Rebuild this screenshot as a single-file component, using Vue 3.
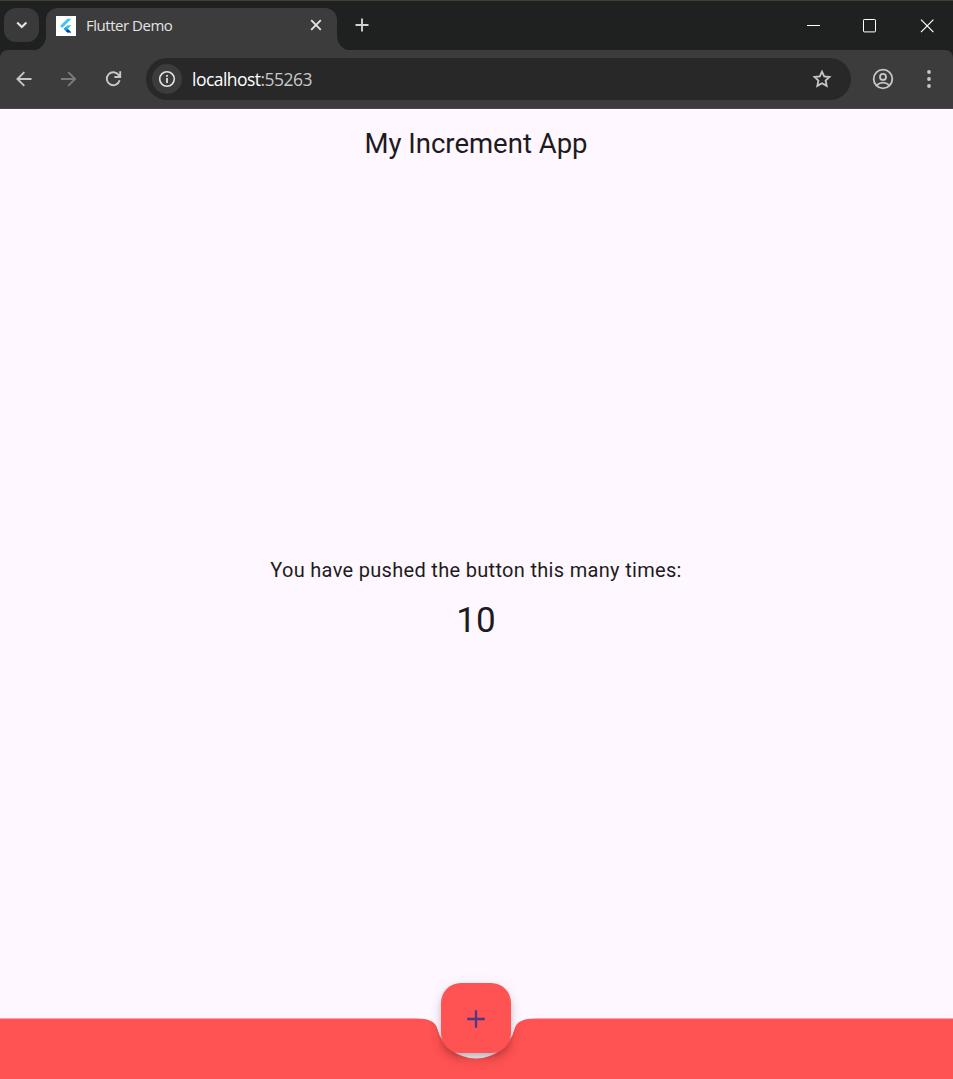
<script setup>
import { ref } from 'vue'

const count = ref(10)
</script>

<template>
  <div class="window">
    <header class="tabstrip">
      <button class="tab-search" aria-label="Search tabs">
        <svg width="35" height="34" viewBox="0 0 35 34"><path d="M13.2 14.6 17.8 19.1 22.4 14.6" fill="none" stroke="#e3e3e3" stroke-width="2.1" /></svg>
      </button>
      <div class="tab">
        <svg class="flare left" width="15" height="15" viewBox="0 0 15 15"><path d="M15 0V15H0A15 15 0 0 0 15 0Z" fill="#3c3c3c" /></svg>
        <svg class="favicon" width="20" height="20" viewBox="0 0 20 20">
          <path d="M0 0H20V20H0Z" fill="#fff" />
          <path d="M11.3 2.7H15.4L6.2 12 4.1 9.9Z" fill="#45c1f5" />
          <path d="M11.4 9.2H15.4L11.8 12.9 15.4 16.6H11.4L7.6 12.9Z" fill="#42bdf2" />
          <path d="M9.7 15 11.8 12.9 15.4 16.6H11.4Z" fill="#08418e" />
          <path d="M7.6 12.9 9.7 10.9 11.8 12.9 9.7 15Z" fill="#259fe5" />
        </svg>
        <span class="tab-title">Flutter Demo</span>
        <svg class="tab-close" width="12" height="12" viewBox="0 0 12 12"><path d="M1.2 1.2 10.8 10.8M10.8 1.2 1.2 10.8" stroke="#e3e3e3" stroke-width="1.9" /></svg>
        <svg class="flare right" width="15" height="15" viewBox="0 0 15 15"><path d="M0 0V15H15A15 15 0 0 1 0 0Z" fill="#3c3c3c" /></svg>
      </div>
      <svg class="new-tab" width="14" height="14" viewBox="0 0 14 14"><path d="M7 .5V13.5M.5 7H13.5" stroke="#d0d1d0" stroke-width="1.9" /></svg>
      <div class="controls">
        <svg width="14" height="14" viewBox="0 0 14 14"><path d="M1 6.5H14" stroke="#fff" /></svg>
        <svg width="14" height="14" viewBox="0 0 14 14"><rect x=".5" y=".5" width="12" height="12.4" rx=".7" fill="none" stroke="#fff" /></svg>
        <svg width="14" height="14" viewBox="0 0 14 14"><path d="M1 .7 13.4 13.1M13.4.7 1 13.1" stroke="#fff" stroke-width="1.2" /></svg>
      </div>
    </header>

    <nav class="toolbar">
      <svg class="nav-icon" width="20" height="20" viewBox="0 0 20 20"><path d="M17.5 10H3.5M10.3 3.1 3.4 10 10.3 16.9" fill="none" stroke="#c7c7c7" stroke-width="1.9" /></svg>
      <svg class="nav-icon" width="20" height="20" viewBox="0 0 20 20"><path d="M2 10H16M9.2 3.1 16.1 10 9.2 16.9" fill="none" stroke="#7b7b7b" stroke-width="1.9" /></svg>
      <svg class="nav-icon" width="20" height="20" viewBox="0 0 20 20"><path d="M15.6 11.3A6.5 6.5 0 1 1 14.7 6.1L16.1 7.7M16.2 2.3V8H10.4" fill="none" stroke="#c7c7c7" stroke-width="1.9" /></svg>
      <div class="address">
        <span class="site-info">
          <svg width="18" height="18" viewBox="0 0 18 18"><circle cx="9" cy="9" r="7.3" fill="none" stroke="#e3e3e3" stroke-width="1.6" /><path d="M9 8.1V13M9 5V6.8" stroke="#e3e3e3" stroke-width="1.8" /></svg>
        </span>
        <span class="url">localhost<span class="port">:55263</span></span>
        <svg class="star" width="20" height="20" viewBox="0 0 20 20"><path d="M10 2.6 12.2 7.4 17.5 8 13.6 11.6 14.7 16.9 10 14.2 5.3 16.9 6.4 11.6 2.5 8 7.8 7.4Z" fill="none" stroke="#c7c7c7" stroke-width="1.8" /></svg>
      </div>
      <svg class="profile" width="22" height="22" viewBox="0 0 22 22"><g fill="none" stroke="#c7c7c7" stroke-width="1.8"><circle cx="11" cy="11" r="9.3" /><circle cx="11" cy="8.9" r="3" /><path d="M4.6 17.3Q11 12 17.4 17.3" /></g></svg>
      <svg class="more" width="6" height="20" viewBox="0 0 6 20"><g fill="#c7c7c7"><circle cx="3" cy="3" r="1.9" /><circle cx="3" cy="10" r="1.9" /><circle cx="3" cy="17" r="1.9" /></g></svg>
    </nav>

    <main class="app">
      <h1>My Increment App</h1>
      <section class="counter">
        <p class="caption">You have pushed the button this many times:</p>
        <p class="value">{{ count }}</p>
      </section>
      <footer class="bottom">
        <svg class="bar" width="953" height="61" viewBox="0 0 953 61"><path d="M0 .5H416Q434.75.5 437.21 10.27A40 40 0 0 0 514.79 10.27Q517.25.5 536 .5H953V61H0Z" fill="#ff5252" /></svg>
        <button class="fab" aria-label="Increment" @click="count++">
          <svg width="18" height="18" viewBox="0 0 18 18"><path d="M9 .2V17.8M.2 9H17.8" stroke="#4f378b" stroke-width="2.3" /></svg>
        </button>
      </footer>
    </main>
  </div>
</template>

<style>
html, body { margin: 0; background: #fef7ff; overflow: hidden; }
</style>

<style scoped>
* { box-sizing: border-box; }
svg { display: block; flex: none; }
button { border: 0; padding: 0; font: inherit; cursor: pointer; }
.window { width: 953px; height: 1079px; display: flex; flex-direction: column; overflow: hidden; background: #1f2120; }
.tabstrip { height: 50px; flex: none; display: flex; background: #1f2120; border-top: 1px solid #3f4032; padding-left: 4px; }
.tab-search { width: 35px; height: 34px; margin-top: 7px; border-radius: 12px; background: #3a3a3a; }
.tab { position: relative; width: 290.5px; height: 43px; margin: 6.5px 0 0 7px; padding: 0 14.5px 7px 10px; display: flex; align-items: center; background: #3c3c3c; border-radius: 12px 12px 0 0; }
.flare { position: absolute; bottom: 0; }
.flare.left { left: -15px; }
.flare.right { right: -15px; }
.favicon { margin-right: 10px; }
.tab-title { margin-top: -1px; font: 15px/20px "Open Sans", "Noto Sans", sans-serif; letter-spacing: -0.48px; color: #e3e3e3; white-space: nowrap; }
.tab-close { margin: -1px 0 0 auto; }
.new-tab { margin: 17px 0 0 18.5px; }
.controls { margin-left: auto; display: flex; gap: 43px; padding: 18px 19px 0 0; }
.toolbar { height: 59px; flex: none; display: flex; align-items: center; padding: 0 21.5px 1px 13.5px; background: #3c3c3c; border-bottom: 1px solid #4a474b; border-radius: 8px 8px 0 0; }
.nav-icon { margin-right: 25px; }
.address { width: 705px; height: 42px; margin: 0 0 0 -2.5px; padding: 0 19.5px 0 6px; display: flex; align-items: center; background: #282828; border-radius: 21px; }
.site-info { width: 30px; height: 30px; border-radius: 50%; background: #3c3c3c; display: grid; place-items: center; }
.url { margin-left: 10px; font: 17.5px/26px "Open Sans", "Noto Sans", sans-serif; letter-spacing: -0.53px; color: #fff; }
.port { color: #c7c7c7; }
.star { margin-left: auto; }
.profile { margin-left: 21px; }
.more { margin-left: auto; }
.app { flex: 1; display: flex; flex-direction: column; background: #fef7ff; font-family: Roboto, sans-serif; color: #1d1b20; }
h1 { height: 70px; margin: 0; padding-right: 1px; text-align: center; font-size: 27.5px; font-weight: 400; line-height: 70px; }
.counter { flex: 1; display: flex; flex-direction: column; align-items: center; justify-content: center; padding-top: 1px; }
.caption { margin: 0; padding-right: 1px; font-size: 20px; line-height: 30px; letter-spacing: .3125px; }
.value { margin: 13px 0 0; padding-right: 1px; font-size: 35px; line-height: 45px; }
.bottom { position: relative; height: 61px; flex: none; }
.fab { position: absolute; left: 441px; top: -35px; width: 70px; height: 70px; padding-top: 1px; display: grid; place-items: center; border-radius: 20px; background: #ff5252; box-shadow: 0 4px 6px -1px rgba(0,0,0,.18), 0 7px 12px rgba(0,0,0,.1), 0 1px 16px rgba(0,0,0,.05); }
</style>
